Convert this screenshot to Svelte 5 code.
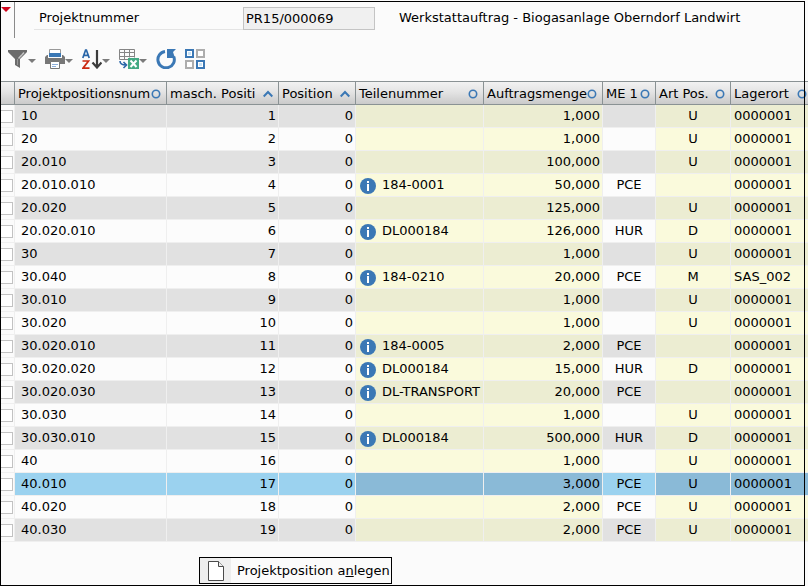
<script lang="ts">
	interface Column {
		label: string;
		width?: number;
		sort: 'none' | 'asc';
	}

	interface Row {
		id: string;
		pos: number;
		part?: string;
		amount: string;
		unit?: string;
		kind?: string;
		store: string;
	}

	const columns: Column[] = [
		{ label: 'Projektpositionsnum', width: 152, sort: 'none' },
		{ label: 'masch. Positi', width: 112, sort: 'asc' },
		{ label: 'Position', width: 77, sort: 'asc' },
		{ label: 'Teilenummer', width: 128, sort: 'none' },
		{ label: 'Auftragsmenge', width: 119, sort: 'none' },
		{ label: 'ME 1', width: 53, sort: 'none' },
		{ label: 'Art Pos.', width: 75, sort: 'none' },
		{ label: 'Lagerort', sort: 'none' }
	];

	const rows: Row[] = [
		{ id: '10', pos: 1, amount: '1,000', kind: 'U', store: '0000001' },
		{ id: '20', pos: 2, amount: '1,000', kind: 'U', store: '0000001' },
		{ id: '20.010', pos: 3, amount: '100,000', kind: 'U', store: '0000001' },
		{ id: '20.010.010', pos: 4, part: '184-0001', amount: '50,000', unit: 'PCE', store: '0000001' },
		{ id: '20.020', pos: 5, amount: '125,000', kind: 'U', store: '0000001' },
		{ id: '20.020.010', pos: 6, part: 'DL000184', amount: '126,000', unit: 'HUR', kind: 'D', store: '0000001' },
		{ id: '30', pos: 7, amount: '1,000', kind: 'U', store: '0000001' },
		{ id: '30.040', pos: 8, part: '184-0210', amount: '20,000', unit: 'PCE', kind: 'M', store: 'SAS_002' },
		{ id: '30.010', pos: 9, amount: '1,000', kind: 'U', store: '0000001' },
		{ id: '30.020', pos: 10, amount: '1,000', kind: 'U', store: '0000001' },
		{ id: '30.020.010', pos: 11, part: '184-0005', amount: '2,000', unit: 'PCE', store: '0000001' },
		{ id: '30.020.020', pos: 12, part: 'DL000184', amount: '15,000', unit: 'HUR', kind: 'D', store: '0000001' },
		{ id: '30.020.030', pos: 13, part: 'DL-TRANSPORT', amount: '20,000', unit: 'PCE', store: '0000001' },
		{ id: '30.030', pos: 14, amount: '1,000', kind: 'U', store: '0000001' },
		{ id: '30.030.010', pos: 15, part: 'DL000184', amount: '500,000', unit: 'HUR', kind: 'D', store: '0000001' },
		{ id: '40', pos: 16, amount: '1,000', kind: 'U', store: '0000001' },
		{ id: '40.010', pos: 17, amount: '3,000', unit: 'PCE', kind: 'U', store: '0000001' },
		{ id: '40.020', pos: 18, amount: '2,000', unit: 'PCE', kind: 'U', store: '0000001' },
		{ id: '40.030', pos: 19, amount: '2,000', unit: 'PCE', kind: 'U', store: '0000001' }
	];

	let selected = $state('40.010');
	let project = $state('PR15/000069');
</script>

{#snippet caret()}
	<svg class="caret" width="8" height="4" viewBox="0 0 8 4"><path d="M0 0h8L4 4z" fill="#7b7b7b" /></svg>
{/snippet}

<main class="screen">
	<header class="head">
		<div class="flag">
			<svg width="10" height="5" viewBox="0 0 10 5"><path d="M0 0h10L5 5z" fill="#d0021b" /></svg>
		</div>
		<label class="label" for="project">Projektnummer</label>
		<input id="project" class="project" type="text" bind:value={project} />
		<span class="title">Werkstattauftrag - Biogasanlage Oberndorf Landwirt</span>
	</header>

	<nav class="toolbar">
		<button class="tool" aria-label="Filter">
			<svg width="20" height="20" viewBox="0 0 20 20">
				<path d="M0 1h19v2l-7 7v9l-5-3v-6L0 3z" fill="#6b6b6b" />
				<path d="M10.500 9.500L16 3.500" stroke="#c4c4c4" stroke-width="1.500" />
				<path d="M9.500 10v6" stroke="#989898" />
			</svg>
			{@render caret()}
		</button>
		<button class="tool" aria-label="Drucken">
			<svg width="20" height="20" viewBox="0 0 20 20">
				<path d="M4.500 5V.500h11V5" fill="#fff" stroke="#999" />
				<path d="M2 6h16l2 2v7H0V8z" fill="#777" />
				<path d="M3 4h14v5H3z" fill="#fbfbfb" />
				<path d="M4 4h12v4H4z" fill="#3b78b5" />
				<path d="M5.500 12.500h9v7h-9z" fill="#fff" stroke="#777" />
				<path d="M7 15.500h6M7 17.500h4" stroke="#8db0dc" />
			</svg>
			{@render caret()}
		</button>
		<button class="tool" aria-label="Sortieren">
			<svg width="20" height="20" viewBox="0 0 20 20">
				<path d="M.800 9L3.600 1h.800L7.200 9M2 6.300h4" fill="none" stroke="#2a66a8" stroke-width="1.700" />
				<path d="M.500 12h6L1 19.200h6.500" fill="none" stroke="#cb2a12" stroke-width="1.700" />
				<path d="M15 1v17M10.500 13.500L15 18.500l4.500-5" fill="none" stroke="#3c3c3c" stroke-width="2.200" />
			</svg>
			{@render caret()}
		</button>
		<button class="tool" aria-label="Excel-Export">
			<svg width="20" height="20" viewBox="0 0 20 20">
				<path d="M.500 10.500V.500h15v8M.500 10.500H9M.500 3.500h15M.500 7.500h15M5.500.500v10M10.500.500v8" fill="none" stroke="#858585" />
				<path d="M1 12c0 3 2 4 6 4M4.500 13l3 3-3 3" fill="none" stroke="#2a66a8" stroke-width="1.600" />
				<path d="M9 9h11v11H9z" fill="#43a982" />
				<path d="M11.500 11.500l6 6.500M17.500 11.500l-6 6.500" stroke="#fff" stroke-width="2" />
			</svg>
			{@render caret()}
		</button>
		<button class="tool" aria-label="Aktualisieren">
			<svg width="20" height="20" viewBox="0 0 20 20">
				<path d="M9 2.500A8.200 8.200 0 1 0 17.700 7.500" fill="none" stroke="#3b78b5" stroke-width="3" />
				<path d="M11 0h9l-3 3 2 6h-8z" fill="#3b78b5" />
			</svg>
		</button>
		<button class="tool" aria-label="Kacheln">
			<svg width="20" height="20" viewBox="0 0 20 20" fill="#fff" stroke-width="2">
				<path d="M1 1h7v7H1zM12 12h7v7h-7z" stroke="#3b78b5" />
				<path d="M3 3h3v3H3zM14 14h3v3h-3z" fill="#c8e4f8" />
				<path d="M12 1h7v7h-7zM1 12h7v7H1z" stroke="#adadad" />
			</svg>
		</button>
	</nav>

	<table class="grid">
		<colgroup>
			<col style:width="15px" />
			{#each columns as col}
				<col style:width={col.width ? `${col.width}px` : 'auto'} />
			{/each}
		</colgroup>
		<thead>
			<tr>
				<th></th>
				{#each columns as col}
					<th>
						<div class="th">
							<span>{col.label}</span>
							<svg width="10" height="10" viewBox="0 0 10 10" fill="none" stroke="#3b78b5">
								{#if col.sort === 'asc'}
									<path d="M.700 7.500L5 3l4.300 4.500" stroke-width="2" />
								{:else}
									<circle cx="5" cy="5" r="3.700" stroke-width="1.600" />
								{/if}
							</svg>
						</div>
					</th>
				{/each}
			</tr>
		</thead>
		<tbody>
			{#each rows as row (row.id)}
				<tr class:selected={row.id === selected} onclick={() => (selected = row.id)}>
					<td class="check"><input type="checkbox" aria-label="Position {row.id}" /></td>
					<td class="id">{row.id}</td>
					<td class="num">{row.pos}</td>
					<td class="num">0</td>
					<td class="edit">
						{#if row.part}
							<div class="part">
								<svg width="16" height="16" viewBox="0 0 16 16">
									<circle cx="8" cy="8" r="8" fill="#3b78b5" />
									<path d="M7 3h2v2H7zM7 6h2v7H7z" fill="#fff" />
								</svg>
								<span>{row.part}</span>
							</div>
						{/if}
					</td>
					<td class="num edit">{row.amount}</td>
					<td class="mid">{row.unit ?? ''}</td>
					<td class="mid edit">{row.kind ?? ''}</td>
					<td class="edit">{row.store}</td>
				</tr>
			{/each}
		</tbody>
	</table>

	<footer class="foot">
		<button class="create">
			<span class="doc">
				<svg width="16" height="20" viewBox="0 0 16 20">
					<path d="M.500.500h10l5 5v14H.500z" fill="#fff" stroke="#4a4a4a" />
					<path d="M10.500.500v5h5" fill="#eee" stroke="#4a4a4a" />
				</svg>
			</span>
			<span class="create-text">Projektposition a<u>n</u>legen</span>
		</button>
	</footer>
	<div class="frame"></div>
</main>

<style>
	:global(body) {
		margin: 0;
		background: #fbfbfb;
	}

	.screen {
		position: relative;
		padding-top: 2px;
		overflow: hidden;
		font: 13px/22px 'DejaVu Sans', Verdana, sans-serif;
		color: #000;
		background: #fbfbfb;
	}

	/* Outline lies over the table, whose last column runs on past it. */
	.frame {
		position: absolute;
		inset: 1px 3px 0 0;
		border: 1px solid #000;
		pointer-events: none;
	}

	.head {
		display: flex;
		align-items: flex-start;
		height: 36px;
	}

	.flag {
		display: flex;
		box-sizing: border-box;
		width: 15px;
		height: 36px;
		padding: 5px 0 0 1px;
		border-right: 1px solid #8a8a8a;
	}

	.label {
		box-sizing: border-box;
		width: 209px;
		height: 28px;
		margin-left: 19px;
		padding: 5px 0 0 5px;
		border-bottom: 1px solid #e4e4e4;
	}

	.project {
		box-sizing: border-box;
		width: 132px;
		height: 23px;
		margin: 5px 0 0;
		padding: 0 2px;
		border: 1px solid #c4c4c4;
		border-radius: 0;
		background: #f0f0f0;
		font: inherit;
		color: inherit;
	}

	.title {
		margin-left: 24px;
		padding-top: 5px;
		white-space: nowrap;
	}

	.toolbar {
		display: flex;
		gap: 9px;
		height: 32px;
		padding: 11px 0 0 8px;
	}

	.tool {
		display: flex;
		align-items: center;
		height: 20px;
		padding: 0;
		border: 0;
		background: none;
	}

	.caret {
		margin-top: 4px;
	}

	.grid {
		width: 100%;
		table-layout: fixed;
		border-collapse: separate;
		border-spacing: 0;
	}

	th {
		box-sizing: border-box;
		height: 24px;
		padding: 0;
		border: solid #8a9294;
		border-width: 1px 1px 1px 0;
		background: linear-gradient(#f2f2f2, #e4e4e4 45%, #cacaca);
		font-weight: normal;
		text-align: left;
	}

	.th {
		display: flex;
		align-items: center;
		justify-content: space-between;
		padding: 2px 5px 0 3px;
		line-height: 20px;
		white-space: nowrap;
	}

	th:last-child,
	td:last-child {
		border-right: 0;
	}

	th:last-child .th {
		padding-right: 1px;
	}

	td {
		box-sizing: border-box;
		height: 23px;
		padding: 0 3px;
		border: solid #efefef;
		border-width: 0 1px 1px 0;
		background: #fcfcfc;
		white-space: nowrap;
	}

	.edit {
		background: #fafadc;
	}

	tr:nth-child(odd) td {
		background: #e1e1e1;
	}

	tr:nth-child(odd) .edit {
		background: #ecedd2;
	}

	tr.selected td {
		background: #9bd2ef;
	}

	tr.selected .edit {
		background: #8abad7;
	}

	tbody tr .check,
	tbody tr:nth-child(odd) .check {
		padding: 0;
		background: #fbfbfb;
	}

	.check input {
		appearance: none;
		display: block;
		box-sizing: border-box;
		width: 13px;
		height: 13px;
		margin: 0;
		border: 1px solid #c2c2c2;
		background: #fff;
	}

	.check input:checked {
		background: #3b78b5;
	}

	.id {
		padding-left: 6px;
	}

	.num {
		padding-right: 2px;
		text-align: right;
	}

	.mid {
		text-align: center;
	}

	.part {
		display: flex;
		align-items: center;
		gap: 6px;
		height: 22px;
		padding-left: 1px;
	}

	.part svg {
		margin-top: 2px;
	}

	.foot {
		padding: 15px 0 2px 199px;
	}

	.create {
		display: flex;
		height: 27px;
		padding: 0;
		border: 1px solid #000;
		background: #fbfbfb;
		font: inherit;
		color: inherit;
	}

	.doc {
		display: flex;
		align-items: center;
		justify-content: center;
		width: 31px;
		height: 25px;
		background: #eee;
	}

	.create-text {
		padding: 2px 1px 0 6px;
	}
</style>
